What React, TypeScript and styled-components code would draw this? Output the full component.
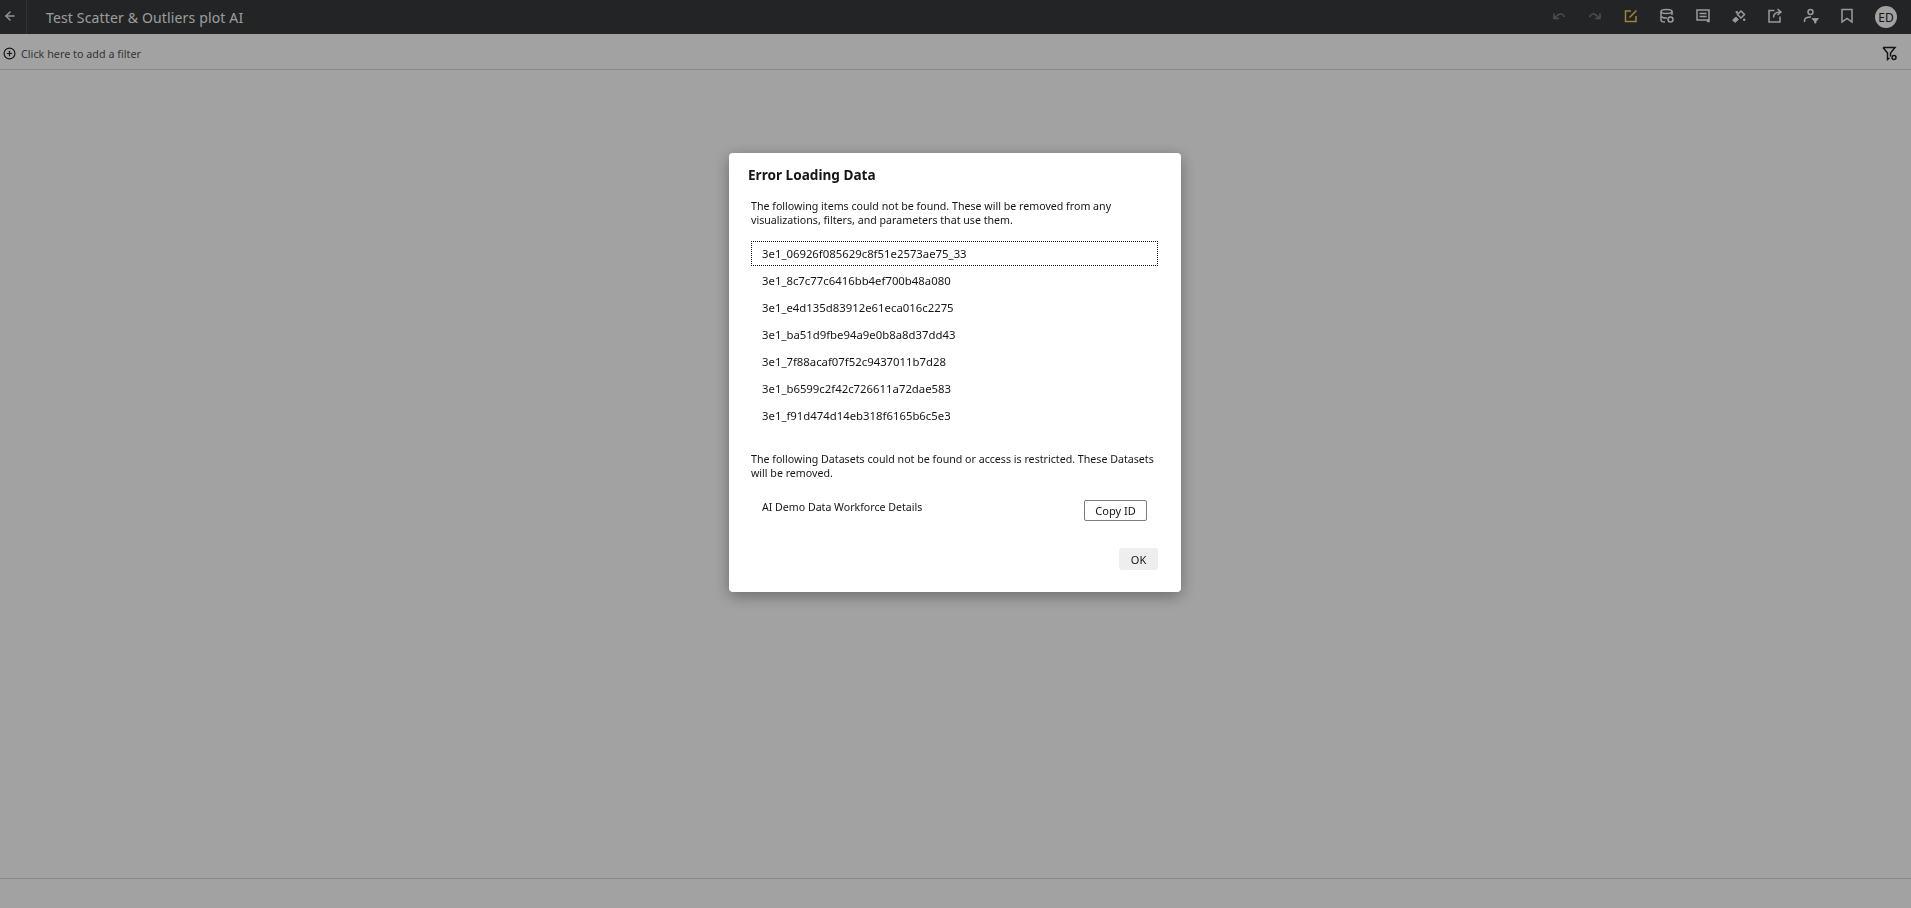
import styled, { createGlobalStyle } from 'styled-components';
import { ArrowLeft, CirclePlus } from 'lucide-react';

const GlobalStyle = createGlobalStyle`
  html, body {
    margin: 0;
    padding: 0;
    height: 100%;
    overflow: hidden;
    background: #fff;
    font-family: 'Noto Sans', 'Open Sans', sans-serif;
  }
`;

const Page = styled.div`
  height: 100vh;
  display: flex;
  flex-direction: column;
`;

const Header = styled.header`
  height: 34px;
  flex: none;
  display: flex;
  align-items: center;
  background: #36393c;
  color: #fff;
`;

const BackButton = styled.div`
  width: 26px;
  height: 34px;
  flex: none;
  display: flex;
  align-items: center;
  border-right: 1px solid #4c4f52;
  color: #e8e8e8;
  svg {
    margin: 0 0 3px 3px;
  }
`;

const Title = styled.div`
  margin-left: 19px;
  font-size: 14px;
  letter-spacing: 0.15px;
  color: #f4f4f4;
  flex: 1;
`;

const Tools = styled.div`
  display: flex;
  align-items: center;
  margin: 0 14px 0 0;
  svg {
    margin-bottom: 2px;
  }
`;

const ToolIcon = styled.svg<{ $tone?: string; $last?: boolean }>`
  width: 16px;
  height: 16px;
  margin-right: ${(p) => (p.$last ? '0' : '20px')};
  fill: none;
  color: ${(p) => p.$tone || '#f4f4f4'};
  stroke: currentColor;
  stroke-width: 1.5;
`;

const Solid = styled.path`
  fill: currentColor;
  stroke-width: 0.8;
`;

const Avatar = styled.div`
  width: 22px;
  height: 22px;
  border-radius: 50%;
  background: #fff;
  color: #222;
  font-size: 12px;
  display: flex;
  align-items: center;
  justify-content: center;
`;

const FilterBar = styled.div`
  height: 36px;
  flex: none;
  box-sizing: border-box;
  display: flex;
  align-items: center;
  padding: 3px 13px 0 3px;
  border-bottom: 1px solid #d9d9d9;
  color: #555;
  font-size: 10.8px;
`;

const FilterHint = styled.span`
  margin-left: 5px;
  flex: 1;
`;

const Main = styled.main`
  flex: 1;
`;

const Footer = styled.footer`
  height: 29px;
  flex: none;
  border-top: 1px solid #d9d9d9;
`;

const Scrim = styled.div`
  position: fixed;
  inset: 0;
  background: rgba(0, 0, 0, 0.365);
  display: flex;
  justify-content: center;
  align-items: flex-start;
  padding: 153px 1px 0 0;
`;

const Dialog = styled.div`
  width: 452px;
  height: 439px;
  box-sizing: border-box;
  background: #fff;
  border-radius: 4px;
  box-shadow: 0 4px 16px rgba(0, 0, 0, 0.35);
  padding: 12px 23px 0 19px;
  color: #161513;
  display: flex;
  flex-direction: column;
`;

const DialogTitle = styled.h1`
  margin: 0;
  font-size: 13.6px;
  line-height: 20px;
  font-weight: 700;
`;

const Message = styled.p<{ $gap: number }>`
  margin: ${(p) => p.$gap}px 0 0 3px;
  font-size: 10.65px;
  line-height: 14px;
`;

const ItemList = styled.ul`
  list-style: none;
  margin: 14px 0 0 3px;
  padding: 0;
  display: flex;
  flex-direction: column;
  gap: 1px;
`;

const Item = styled.li<{ $focused?: boolean }>`
  height: 25px;
  margin-bottom: 1px;
  box-sizing: border-box;
  padding-left: 10px;
  display: flex;
  align-items: center;
  font-size: 11.35px;
  border: 1px ${(p) => (p.$focused ? 'dotted #161513' : 'solid transparent')};
`;

const DatasetRow = styled.div`
  display: flex;
  justify-content: space-between;
  margin: 20px 11px 0 14px;
  font-size: 10.6px;
  line-height: 14px;
`;

const CopyButton = styled.button`
  width: 63px;
  height: 21px;
  padding: 0;
  background: #fff;
  border: 1px solid #7d7d7d;
  border-radius: 2px;
  color: #161513;
  font: 11px 'Noto Sans', sans-serif;
`;

const Actions = styled.div`
  display: flex;
  justify-content: flex-end;
  margin-top: 27px;
`;

const OkButton = styled.button`
  width: 39px;
  height: 22px;
  padding: 0;
  background: #eeeeee;
  border: none;
  border-radius: 3px;
  color: #161513;
  font: 11px 'Noto Sans', sans-serif;
`;

const items = [
  '3e1_06926f085629c8f51e2573ae75_33',
  '3e1_8c7c77c6416bb4ef700b48a080',
  '3e1_e4d135d83912e61eca016c2275',
  '3e1_ba51d9fbe94a9e0b8a8d37dd43',
  '3e1_7f88acaf07f52c9437011b7d28',
  '3e1_b6599c2f42c726611a72dae583',
  '3e1_f91d474d14eb318f6165b6c5e3',
];

export default function App() {
  return (
    <>
      <GlobalStyle />
      <Page>
        <Header>
          <BackButton>
            <ArrowLeft size={14} strokeWidth={2.6} />
          </BackButton>
          <Title>Test Scatter &amp; Outliers plot AI</Title>
          <Tools>
            <ToolIcon viewBox="0 0 16 16" $tone="#7a7c7e">
              <path d="M3 5.500v5h5M3 10.500l4-3.500c2.500-2 5.500-1 6.500 2" />
            </ToolIcon>
            <ToolIcon viewBox="0 0 16 16" $tone="#7a7c7e">
              <path d="M13 5.500v5H8M13 10.500L9 7C6.500 5 3.500 6 2.500 9" />
            </ToolIcon>
            <ToolIcon viewBox="0 0 16 16" $tone="#ffce57">
              <path d="M13 8v5.500H2.500V3H8M6.500 9.500l7-7" />
            </ToolIcon>
            <ToolIcon viewBox="0 0 16 16">
              <ellipse cx="7.500" cy="3.500" rx="5.500" ry="2" />
              <path d="M2 3.500v8.500c0 1 1.500 2 4 2M13 3.500V7M2 8c0 1 3 2.500 6 2" />
              <circle cx="11.500" cy="11.500" r="2.500" />
            </ToolIcon>
            <ToolIcon viewBox="0 0 16 16">
              <path d="M2 2h12v11.500h-1.500V12H2zM4.500 5.500h7M4.500 8.500h7" />
            </ToolIcon>
            <ToolIcon viewBox="0 0 16 16">
              <path d="M10 3l3.500 3.500L10 10 6.500 6.500z" />
              <Solid d="M5 9l2.500 2.500L4 14.500 1.500 12z" />
              <Solid d="M5 3.500h1.500V5H5zM12.500 11h1.500v1.500h-1.500z" />
            </ToolIcon>
            <ToolIcon viewBox="0 0 16 16">
              <path d="M7.500 2.500H2V14h11V8.500M6.500 9.500c0-3.500 2.500-5.500 7-5.500M10.500 1l3.500 3-3.500 3" />
            </ToolIcon>
            <ToolIcon viewBox="0 0 16 16">
              <circle cx="7.500" cy="4" r="2.500" />
              <path d="M1.500 14v-1.500C1.500 10 4 9 8 9" />
              <Solid d="M9 10.500h6.500l-2.500 3v1.500h-1.500v-1.500z" />
            </ToolIcon>
            <ToolIcon viewBox="0 0 16 16">
              <path d="M3 1.500h10v12.500l-5-3.500L3 14z" />
            </ToolIcon>
            <Avatar>ED</Avatar>
          </Tools>
        </Header>
        <FilterBar>
          <CirclePlus size={13} color="#222" strokeWidth={2.2} />
          <FilterHint>Click here to add a filter</FilterHint>
          <ToolIcon viewBox="0 0 16 16" $tone="#222" $last>
            <path d="M1 2.500h12L8.500 8v3.500M1 2.500l4.500 5.500v6.500l2-1.500" />
            <circle cx="12" cy="12.500" r="2" />
          </ToolIcon>
        </FilterBar>
        <Main />
        <Footer />
      </Page>
      <Scrim>
        <Dialog>
          <DialogTitle>Error Loading Data</DialogTitle>
          <Message $gap={14}>
            The following items could not be found. These will be removed from any
            visualizations, filters, and parameters that use them.
          </Message>
          <ItemList>
            {items.map((id, idx) => (
              <Item key={id} $focused={idx === 0}>
                {id}
              </Item>
            ))}
          </ItemList>
          <Message $gap={23}>
            The following Datasets could not be found or access is restricted. These
            Datasets will be removed.
          </Message>
          <DatasetRow>
            <span>AI Demo Data Workforce Details</span>
            <CopyButton>Copy ID</CopyButton>
          </DatasetRow>
          <Actions>
            <OkButton>OK</OkButton>
          </Actions>
        </Dialog>
      </Scrim>
    </>
  );
}
